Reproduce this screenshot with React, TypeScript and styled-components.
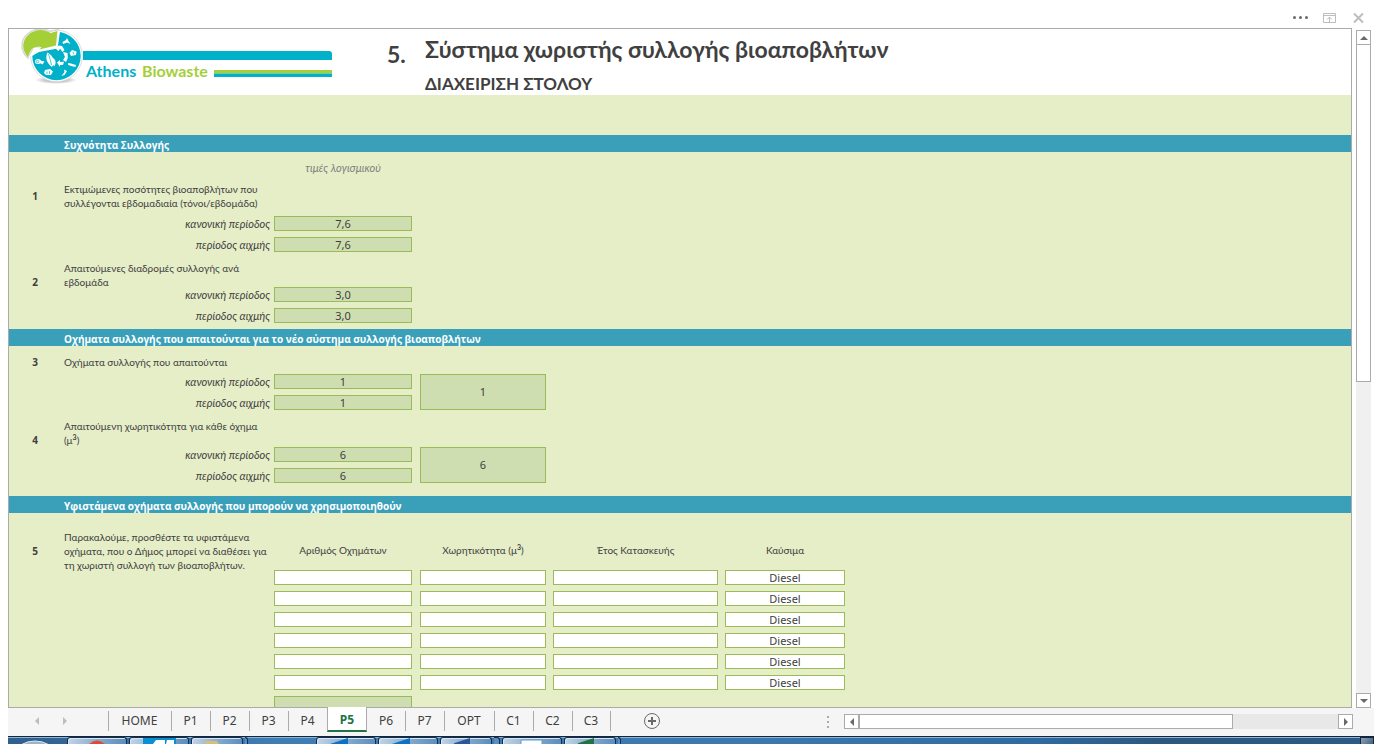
import React from 'react';
import styled, { createGlobalStyle, css } from 'styled-components';

const color = {
  ink: '#404040',
  line: '#ababab',
  sheet: '#e6eec8',
  band: '#3a9fb9',
  field: '#cfdeb0',
  fieldLine: '#9bbb59',
  chrome: '#f5f5f5',
  excel: '#217346',
};

const uiFont = "'Noto Sans', sans-serif";

const Global = createGlobalStyle`
  *, *::before, *::after { box-sizing: border-box; }
  body {
    margin: 0;
    background: #fff;
    color: ${color.ink};
    font: 10px/14px Lato, 'Noto Sans', sans-serif;
  }
  button, input, select { font: inherit; color: inherit; margin: 0; padding: 0; }
  sup { font-size: 7px; line-height: 0; font-weight: 700; }
`;

const Window = styled.div`
  display: flex;
  flex-direction: column;
  height: 100vh;
  padding: 0 8px;
  overflow: hidden;
`;

const TitleBar = styled.div`
  display: flex;
  flex: none;
  justify-content: flex-end;
  align-items: flex-end;
  gap: 13px;
  height: 28px;
  padding: 0 7px 2px 0;
`;

const IconButton = styled.button`
  display: flex;
  align-items: center;
  justify-content: center;
  width: 16px;
  height: 16px;
  border: 0;
  background: none;
`;

const Workspace = styled.div`
  display: flex;
  flex: 1;
  min-height: 0;
  gap: 4px;
  padding-right: 3px;
`;

const Sheet = styled.main`
  flex: 1;
  min-width: 0;
  overflow: hidden;
  border: 1px solid ${color.line};
  background: ${color.sheet};
`;

const Header = styled.header`
  display: flex;
  height: 66px;
  background: #fff;
`;

const LogoBox = styled.div`
  flex: none;
  width: 378px;
`;

const Chapter = styled.div`
  flex: none;
  width: 38px;
  padding-top: 10px;
  font-size: 23px;
  line-height: 30px;
  font-weight: 700;
`;

const Titles = styled.div`
  display: flex;
  flex-direction: column;
  gap: 8px;
  padding-top: 5px;
`;

const Title = styled.h1`
  margin: 0;
  font-size: 23px;
  line-height: 30px;
  font-weight: 700;
`;

const Subtitle = styled.p`
  margin: 0;
  font-size: 17px;
  line-height: 24px;
  font-weight: 700;
`;

const Spacer = styled.div<{ $h: number }>`
  height: ${(p) => p.$h}px;
`;

const Band = styled.h2`
  height: 17px;
  margin: 0;
  padding: 3px 0 0 55px;
  background: ${color.band};
  color: #fff;
  font-family: 'Open Sans', sans-serif;
  font-size: 10px;
  line-height: 14px;
  font-weight: 700;
`;

const Hint = styled.p`
  width: 138px;
  margin: 0 0 0 265px;
  padding: 9px 0 7px;
  text-align: center;
  font-size: 11px;
  font-style: italic;
  color: #808080;
`;

const Question = styled.div<{ $h: number; $top: number; $align?: string }>`
  display: grid;
  grid-template-columns: 52px 213px;
  align-content: start;
  align-items: ${(p) => p.$align ?? 'end'};
  height: ${(p) => p.$h}px;
  padding-top: ${(p) => p.$top}px;
`;

const Num = styled.span`
  text-align: center;
  font-family: ${uiFont};
  font-weight: 700;
`;

const Prompt = styled.p`
  margin: 0;
  padding-left: 3px;
  white-space: pre;
`;

const Answers = styled.div`
  display: flex;
  gap: 8px;
`;

const Period = styled.div`
  display: grid;
  grid-template-columns: 261px 138px;
  align-items: center;
  gap: 4px;
  height: 21px;
`;

const PeriodLabel = styled.label`
  text-align: right;
  font-size: 11px;
  font-style: italic;
`;

const boxed = css`
  display: block;
  width: 100%;
  height: 15px;
  border: 1px solid ${color.fieldLine};
  border-radius: 0;
  outline: 0;
  text-align: center;
  font-family: ${uiFont};
  font-size: 11px;
  line-height: 13px;
`;

const Field = styled.input<{ $calc?: boolean }>`
  ${boxed}
  background: ${(p) => (p.$calc ? color.field : '#fff')};
`;

const MergedField = styled(Field)`
  width: 126px;
  height: 36px;
  margin-top: 3px;
  padding-bottom: 2px;
`;

const Select = styled.select`
  ${boxed}
  appearance: none;
  background: #fff;
  text-align-last: center;
`;

const Fleet = styled.div`
  display: flex;
  align-items: flex-start;
`;

const FleetTable = styled.table`
  table-layout: fixed;
  width: 578px;
  border-collapse: collapse;

  th, td { padding: 0 7px 0 0; }
  th:first-child, td:first-child { padding-right: 8px; }
  th { height: 54px; padding-top: 20px; font-weight: 400; }
  td { height: 21px; }
`;

const VerticalBar = styled.div`
  display: flex;
  flex: none;
  flex-direction: column;
  width: 15px;
  padding-top: 2px;
  background: linear-gradient(#fff 2px, #f0f0f0 2px);
`;

const ScrollButton = styled.button`
  display: flex;
  flex: none;
  align-items: center;
  justify-content: center;
  width: 15px;
  height: 15px;
  border: 1px solid ${color.line};
  background: #fff;
`;

const VerticalTrack = styled.div`
  flex: 1;
`;

const VerticalThumb = styled.div`
  height: 52%;
  border: 1px solid ${color.line};
  border-top-width: 0;
  background: #fff;
`;

const Footer = styled.footer`
  display: flex;
  flex: none;
  height: 28px;
  background: ${color.chrome};
`;

const Paging = styled.div`
  display: flex;
  gap: 12px;
  width: 100px;
  padding: 5px 0 0 21px;
`;

const Tabs = styled.nav`
  display: flex;
  align-items: flex-start;
  font-family: ${uiFont};
`;

const Tab = styled.button<{ $w: number; $active?: boolean; $plain?: boolean }>`
  width: ${(p) => p.$w}px;
  height: 20px;
  margin-top: 3px;
  padding-right: 1px;
  border: 0;
  border-left: 1px solid ${(p) => (p.$plain ? 'transparent' : color.line)};
  background: none;
  font-size: 12px;
  line-height: 20px;
  text-align: center;

  ${(p) =>
    p.$active &&
    css`
      height: 25px;
      margin-top: -1px;
      padding: 3px 0 0;
      border-right: 1px solid ${color.line};
      border-bottom: 2px solid ${color.excel};
      background: #fff;
      color: ${color.excel};
      font-weight: 700;
    `}
`;

const AddSheet = styled(IconButton)`
  width: 83px;
  height: 20px;
  margin-top: 3px;
  border-left: 1px solid ${color.line};
`;

const HorizontalArea = styled.div`
  display: flex;
  width: 529px;
  margin: 6px 21px 0 auto;
`;

const Grip = styled.div`
  display: flex;
  flex-direction: column;
  gap: 3px;
  width: 20px;
  padding: 2px 0 0 3px;

  i { width: 2px; height: 2px; background: ${color.line}; }
`;

const HorizontalTrack = styled.div`
  flex: 1;
  height: 15px;
  background: #e8e8e8;
`;

const HorizontalThumb = styled.div`
  width: 78%;
  height: 15px;
  border: 1px solid ${color.line};
  background: #fff;
`;

const Taskbar = styled.div`
  display: flex;
  flex: none;
  height: 8px;
  overflow: hidden;
  border-top: 1px solid #13263c;
  background: linear-gradient(#8fb4d6 1px, transparent 1px),
    linear-gradient(90deg, #2f5f8d, #3f7db5 20%, #3b78b0 55%, #2f6ba3 75%, #2c587f 84%, #2c5a84);
`;

const TaskGap = styled.div<{ $w: number }>`
  flex: none;
  width: ${(p) => p.$w}px;
`;

const TaskButton = styled.button<{ $w: number }>`
  flex: none;
  display: flex;
  align-items: flex-end;
  width: ${(p) => p.$w}px;
  height: 9px;
  margin-right: 2px;
  padding: 0 0 2px 13px;
  overflow: hidden;
  border: 1px solid #12304d;
  border-bottom: 0;
  border-radius: 3px 3px 0 0;
  background: linear-gradient(100deg, #c3d5e6, #86abcf 50%, #5c8dbd);
  box-shadow: inset 1px 1px 0 #d7e5f2;
`;

const TaskStack = styled(TaskButton)`
  padding: 0;
  border-left: 0;
  border-radius: 0 3px 0 0;
  background: #5c8dbd;
  box-shadow: none;
`;

const ShowDesktop = styled.button`
  width: 14px;
  height: 8px;
  margin-left: auto;
  border: 1px solid #13263c;
  background: linear-gradient(135deg, #8ba3b9, #40617f);
`;

const Arrow = ({ d, fill = '#6a6a6a' }: { d: 'up' | 'down' | 'left' | 'right'; fill?: string }) => {
  const points = {
    up: '0,6 4,2 8,6',
    down: '0,2 8,2 4,6',
    left: '6,0 6,8 2,4',
    right: '2,0 6,4 2,8',
  }[d];
  return (
    <svg width="8" height="8" viewBox="0 0 8 8" aria-hidden="true">
      <polygon points={points} fill={fill} />
    </svg>
  );
};

const Logo = () => (
  <svg width="330" height="60" viewBox="9 29 330 60" role="img" aria-label="Athens Biowaste">
    <defs>
      <radialGradient id="shade">
        <stop offset="0.4" stopColor="#8a8a8a" stopOpacity="0.6" />
        <stop offset="1" stopColor="#8a8a8a" stopOpacity="0" />
      </radialGradient>
    </defs>
    <ellipse cx="56" cy="80" rx="21" ry="4" fill="url(#shade)" />
    <path d="M83 51H329q3 0 3 3V60H83z" fill="#00b1c9" />
    <path d="M214 70H332V73.500H214z" fill="#a5cf37" />
    <path d="M214 73.500H332V77H214z" fill="#00b1c9" />
    <circle cx="56.500" cy="56" r="25.800" fill="#fff" stroke="#d4d4d4" strokeWidth="0.800" />
    <circle cx="56.500" cy="56" r="24.200" fill="#00b1c9" />
    <path
      d="M28 58C20 51 20 40 28 33.500C35 28 45 28 50 31.500L58.500 29.500L57 47L38 50.500L40.500 48C34 47 30 51 28 58z"
      fill="#fff" stroke="#d8d8d8" strokeWidth="1.600"
    />
    <path
      d="M57.500 30L60 31.500L57.500 48.500L39 52L32 56L29 57L34 48L55 46z"
      fill="#fff"
    />
    <path
      d="M28 57C21 50 22 40 28.500 34.500C35 29 44 28.500 50.500 33L57.500 31L56 45.500L39.500 49.500L41.500 47.200C34 45.500 30 49 28 57z"
      fill="#a5cf37"
    />
    <g fill="#fff">
      <path d="M47.500 52.500C45 58 46.500 63 52 67C55.500 61.500 53.500 56 47.500 52.500z" />
      <path d="M53 58C52 61 52.500 64 54 66.500C56.500 63.500 56 60 53 58z" />
      <path d="M56 49L58.500 45.500L62 46L64.500 50L62.500 52L60 48.800L58.500 51z" />
      <path d="M63 52L67.500 53L67.800 58L66 62L63 60L65 57z" />
      <path d="M57 62.500L60 60V62L64 61.800L63 65H60V67z" />
      <ellipse cx="38" cy="61.500" rx="3" ry="2.500" />
      <path d="M40 60.500L44.500 61.500L42.500 64.500L40 63z" />
      <path d="M45 70L50 69L53 71.500L51 75L46 75L44 73z" />
      <path d="M69.500 53L72 50L76.500 51.500L76 55L71 56z" />
      <path d="M68 63L71 63.500L76 65L75.500 67L71 66L68 64.800z" />
      <path d="M64 69.500L67 71L64.500 75L61.500 76L64.500 72z" />
      <path d="M62.500 42L66 40L67 38L68.500 41L70.500 44L67 42.500L63 44z" />
    </g>
    <g fill="none" stroke="#00b1c9" strokeWidth="0.700">
      <circle cx="37.500" cy="61.500" r="1.200" />
      <path d="M48.500 54Q50.500 60 51.500 65M47 71.500V74M49.500 71V74M73 52L74 54.500" />
    </g>
    <g fontFamily="Lato, sans-serif" fontSize="16" fontWeight="700">
      <text x="86" y="77" fill="#00b1c9">Athens</text>
      <text x="142" y="77" fill="#a5cf37">Biowaste</text>
    </g>
  </svg>
);

const Cube = () => (
  <>
    (μ<sup>3</sup>)
  </>
);

type PeriodsProps = { id: string; value: string; merged?: boolean };

const Periods = ({ id, value, merged }: PeriodsProps) => (
  <Answers>
    <div>
      <Period>
        <PeriodLabel htmlFor={`${id}-normal`}>κανονική περίοδος</PeriodLabel>
        <Field id={`${id}-normal`} $calc readOnly value={value} />
      </Period>
      <Period>
        <PeriodLabel htmlFor={`${id}-peak`}>περίοδος αιχμής</PeriodLabel>
        <Field id={`${id}-peak`} $calc readOnly value={value} />
      </Period>
    </div>
    {merged && <MergedField $calc readOnly value={value} aria-label="Σύνολο" />}
  </Answers>
);

const tabs = [
  { name: 'HOME', w: 63 },
  { name: 'P1', w: 39 },
  { name: 'P2', w: 39 },
  { name: 'P3', w: 39 },
  { name: 'P4', w: 39 },
  { name: 'P5', w: 40 },
  { name: 'P6', w: 38 },
  { name: 'P7', w: 39 },
  { name: 'OPT', w: 50 },
  { name: 'C1', w: 39 },
  { name: 'C2', w: 39 },
  { name: 'C3', w: 38 },
];

const TaskIcon = ({ kind }: { kind: string }) => (
  <svg width="36" height="6" viewBox="0 0 36 6" aria-hidden="true">
    {kind === 'browser' && <path d="M8 6Q16-1 24 6z" fill="#dd4b39" />}
    {kind === 'mail' && <path d="M0 0H33V6H0z" fill="#0a8fd4" />}
    {kind === 'mail' && <path d="M10 6L13 2H22V6zM24 2H31V6H23z" fill="#fff" />}
    {kind === 'folder' && <path d="M0 6V4Q0 3 1 3H12L14 6z" fill="#d9bd7c" />}
    {kind === 'office' && <path d="M0 6L18 0V6z" fill="#0d72c6" />}
    {kind === 'word' && <path d="M-2 6L16 0V6z" fill="#2b579a" />}
    {kind === 'excel' && <path d="M-2 6L16 0V6z" fill="#217346" />}
    {kind === 'photo' && <path d="M5 6V2H26V6" fill="#fff" stroke="#5aa0c8" />}
  </svg>
);

export default function App() {
  return (
    <>
      <Global />
      <Window>
        <TitleBar>
          <IconButton aria-label="Περισσότερα">
            <svg width="16" height="16" viewBox="0 0 16 16" fill="#6a6a6a">
              <circle cx="1.500" cy="7.500" r="1.500" />
              <circle cx="7.500" cy="7.500" r="1.500" />
              <circle cx="13.500" cy="7.500" r="1.500" />
            </svg>
          </IconButton>
          <IconButton aria-label="Επιλογές κορδέλας">
            <svg width="16" height="16" viewBox="0 0 16 16" fill="none" stroke="#bdbdbd">
              <path d="M1.500 3.500H13.500V12.500H1.500zM1.500 5.500H13.500M7.500 12V7M5 9.500L7.500 7L10 9.500" />
            </svg>
          </IconButton>
          <IconButton aria-label="Κλείσιμο">
            <svg width="16" height="16" viewBox="0 0 16 16" stroke="#bdbdbd" strokeWidth="2">
              <path d="M3 3.500L12 12.500M12 3.500L3 12.500" />
            </svg>
          </IconButton>
        </TitleBar>

        <Workspace>
          <Sheet>
            <Header>
              <LogoBox>
                <Logo />
              </LogoBox>
              <Chapter>5.</Chapter>
              <Titles>
                <Title>Σύστημα χωριστής συλλογής βιοαποβλήτων</Title>
                <Subtitle>ΔΙΑΧΕΙΡΙΣΗ ΣΤΟΛΟΥ</Subtitle>
              </Titles>
            </Header>
            <Spacer $h={40} />

            <Band>Συχνότητα Συλλογής</Band>
            <Hint>τιμές λογισμικού</Hint>
            <Question $h={31} $top={0} $align="center">
              <Num>1</Num>
              <Prompt>{'Εκτιμώμενες ποσότητες βιοαποβλήτων που\nσυλλέγονται εβδομαδιαία (τόνοι/εβδομάδα)'}</Prompt>
            </Question>
            <Periods id="quantity" value="7,6" />
            <Question $h={29} $top={6}>
              <Num>2</Num>
              <Prompt>{'Απαιτούμενες διαδρομές συλλογής ανά\nεβδομάδα'}</Prompt>
            </Question>
            <Periods id="routes" value="3,0" />
            <Spacer $h={3} />

            <Band>Οχήματα συλλογής που απαιτούνται για το νέο σύστημα συλλογής βιοαποβλήτων</Band>
            <Question $h={25} $top={9}>
              <Num>3</Num>
              <Prompt>Οχήματα συλλογής που απαιτούνται</Prompt>
            </Question>
            <Periods id="vehicles" value="1" merged />
            <Question $h={31} $top={6}>
              <Num>4</Num>
              <Prompt>
                {'Απαιτούμενη χωρητικότητα για κάθε όχημα\n'}
                <Cube />
              </Prompt>
            </Question>
            <Periods id="capacity" value="6" merged />
            <Spacer $h={10} />

            <Band>Υφιστάμενα οχήματα συλλογής που μπορούν να χρησιμοποιηθούν</Band>
            <Fleet>
              <Question $h={54} $top={17} $align="center">
                <Num>5</Num>
                <Prompt>{'Παρακαλούμε, προσθέστε τα υφιστάμενα\nοχήματα, που ο Δήμος μπορεί να διαθέσει για\nτη χωριστή συλλογή των βιοαποβλήτων.'}</Prompt>
              </Question>
              <FleetTable>
                <colgroup>
                  <col width="146" />
                  <col width="133" />
                  <col width="172" />
                  <col width="127" />
                </colgroup>
                <thead>
                  <tr>
                    <th scope="col">Αριθμός Οχημάτων</th>
                    <th scope="col">Χωρητικότητα <Cube /></th>
                    <th scope="col">Έτος Κατασκευής</th>
                    <th scope="col">Καύσιμα</th>
                  </tr>
                </thead>
                <tbody>
                  {[1, 2, 3, 4, 5, 6].map((n) => (
                    <tr key={n}>
                      <td><Field aria-label={`Αριθμός Οχημάτων ${n}`} /></td>
                      <td><Field aria-label={`Χωρητικότητα ${n}`} /></td>
                      <td><Field aria-label={`Έτος Κατασκευής ${n}`} /></td>
                      <td>
                        <Select aria-label={`Καύσιμα ${n}`}>
                          <option>Diesel</option>
                        </Select>
                      </td>
                    </tr>
                  ))}
                </tbody>
                <tfoot>
                  <tr>
                    <td><Field $calc readOnly aria-label="Σύνολο οχημάτων" /></td>
                  </tr>
                </tfoot>
              </FleetTable>
            </Fleet>
          </Sheet>

          <VerticalBar>
            <ScrollButton aria-label="Πάνω"><Arrow d="up" /></ScrollButton>
            <VerticalTrack><VerticalThumb /></VerticalTrack>
            <ScrollButton aria-label="Κάτω"><Arrow d="down" /></ScrollButton>
          </VerticalBar>
        </Workspace>

        <Footer>
          <Paging>
            <IconButton aria-label="Προηγούμενο φύλλο"><Arrow d="left" fill="#bdbdbd" /></IconButton>
            <IconButton aria-label="Επόμενο φύλλο"><Arrow d="right" fill="#bdbdbd" /></IconButton>
          </Paging>
          <Tabs>
            {tabs.map(({ name, w }) => (
              <Tab key={name} $w={w} $active={name === 'P5'} $plain={name === 'P6'}>
                {name}
              </Tab>
            ))}
            <AddSheet aria-label="Νέο φύλλο">
              <svg width="18" height="18" viewBox="0 0 18 18" fill="none" stroke="#6a6a6a">
                <circle cx="9" cy="9" r="7.500" />
                <path d="M5 9H13M9 5V13" strokeWidth="2" />
              </svg>
            </AddSheet>
          </Tabs>
          <HorizontalArea>
            <Grip><i /><i /><i /></Grip>
            <ScrollButton aria-label="Αριστερά"><Arrow d="left" /></ScrollButton>
            <HorizontalTrack><HorizontalThumb /></HorizontalTrack>
            <ScrollButton aria-label="Δεξιά"><Arrow d="right" /></ScrollButton>
          </HorizontalArea>
        </Footer>

        <Taskbar>
          <TaskGap $w={59}>
            <svg width="59" height="8" viewBox="0 0 59 8" aria-hidden="true">
              <ellipse cx="27" cy="12" rx="18" ry="11" fill="#9bb4c9" stroke="#dbe6ef" />
            </svg>
          </TaskGap>
          <TaskButton $w={60} aria-label="Chrome"><TaskIcon kind="browser" /></TaskButton>
          <TaskButton $w={60} aria-label="Outlook"><TaskIcon kind="mail" /></TaskButton>
          <TaskButton $w={52} aria-label="Explorer"><TaskIcon kind="folder" /></TaskButton>
          <TaskStack $w={3} aria-label="Explorer 2" />
          <TaskGap $w={66} />
          <TaskButton $w={60} aria-label="Mail"><TaskIcon kind="office" /></TaskButton>
          <TaskButton $w={60} aria-label="Mail 2"><TaskIcon kind="office" /></TaskButton>
          <TaskButton $w={52} aria-label="Word"><TaskIcon kind="word" /></TaskButton>
          <TaskStack $w={6} aria-label="Word 2" />
          <TaskButton $w={60} aria-label="Photo"><TaskIcon kind="photo" /></TaskButton>
          <TaskButton $w={52} aria-label="Excel"><TaskIcon kind="excel" /></TaskButton>
          <TaskStack $w={3} aria-label="Excel 2" />
          <ShowDesktop aria-label="Desktop" />
        </Taskbar>
      </Window>
    </>
  );
}
